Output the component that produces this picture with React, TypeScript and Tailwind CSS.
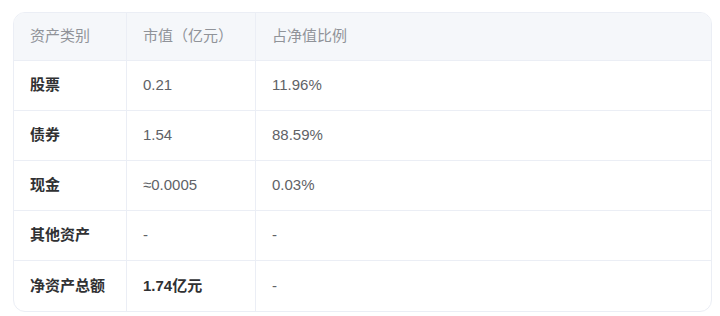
import React from 'react';

const rows = [
  { name: '股票', value: '0.21', ratio: '11.96%' },
  { name: '债券', value: '1.54', ratio: '88.59%' },
  { name: '现金', value: '≈0.0005', ratio: '0.03%' },
  { name: '其他资产', value: '-', ratio: '-' },
  { name: '净资产总额', value: '1.74亿元', ratio: '-', bold: true },
];

const font = { fontFamily: '"Liberation Sans", "Noto Sans CJK SC", sans-serif' };

export default function App() {
  return (
    <div className="w-[720px] h-[316px] bg-white pt-[12px] pl-[13px] pr-[8px] [text-spacing-trim:space-all]" style={font}>
      <div className="border border-[#ebeef5] rounded-[12px] overflow-hidden">
        <div className="grid grid-cols-[113px_129px_1fr] h-[48px] bg-[#f5f7fa] border-b border-[#ebeef5] text-[15px] text-[#909399]">
          <div className="flex items-center pl-[16px] border-r border-[#ebeef5]">资产类别</div>
          <div className="flex items-center pl-[16px] border-r border-[#ebeef5]">市值（亿元）</div>
          <div className="flex items-center pl-[16px]">占净值比例</div>
        </div>
        {rows.map((r, i) => (
          <div
            key={i}
            className={
              'grid grid-cols-[113px_129px_1fr] h-[50px] text-[15px] text-[#606266] ' +
              (i !== rows.length - 1 ? 'border-b border-[#ebeef5]' : '')
            }
          >
            <div className="flex items-center pl-[16px] border-r border-[#ebeef5] font-bold text-[#303133]">{r.name}</div>
            <div className={'flex items-center pl-[16px] border-r border-[#ebeef5] ' + (r.bold ? 'font-bold text-[#303133]' : '')}>
              {r.value}
            </div>
            <div className="flex items-center pl-[16px]">{r.ratio}</div>
          </div>
        ))}
      </div>
    </div>
  );
}
